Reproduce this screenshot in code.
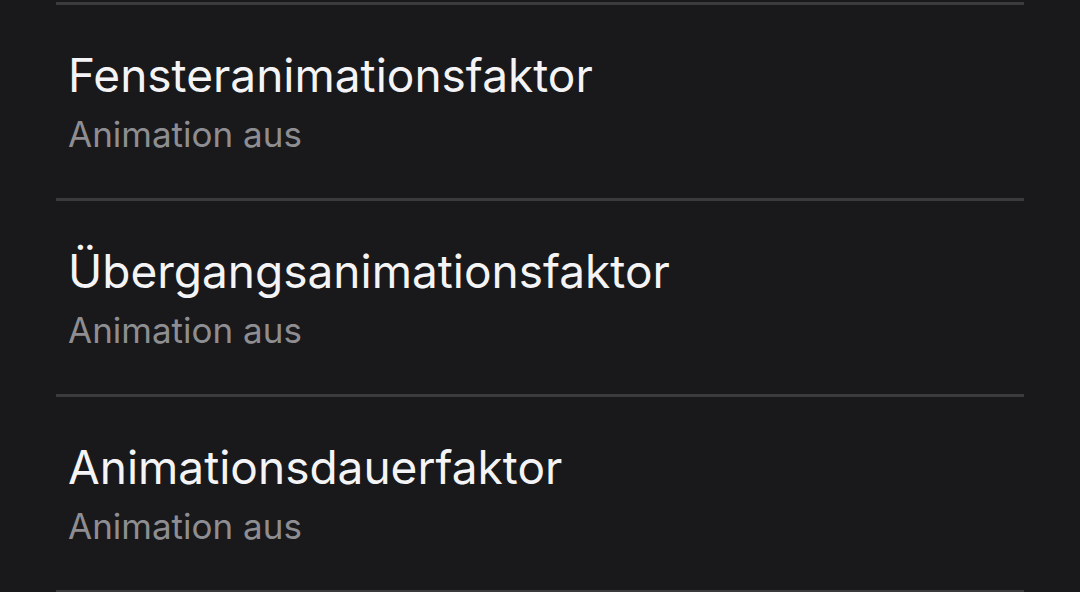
const rows = [
  { title: 'Fensteranimationsfaktor', value: 'Animation aus' },
  { title: 'Übergangsanimationsfaktor', value: 'Animation aus' },
  { title: 'Animationsdauerfaktor', value: 'Animation aus' },
]

const App = () => {
  return (
    <div className="w-[1080px] h-[592px] overflow-hidden bg-[#19191b] pt-[2px]" style={{ fontFamily: 'Inter, "Noto Sans", sans-serif' }}>
      <div className="mx-[56px] h-[3px] bg-[#3b3b3d]" />
      {rows.map((row, i) => (
        <div key={i}>
          <div className="pl-[68px] pt-[44px] pb-[42px]">
            <div className="text-[46px] leading-[52px] text-[#f4f4f6]">{row.title}</div>
            <div className="mt-[11px] text-[35px] leading-[44px] text-[#8e8e92]">{row.value}</div>
          </div>
          <div className="mx-[56px] h-[3px] bg-[#3b3b3d]" />
        </div>
      ))}
    </div>
  )
}

export default App
